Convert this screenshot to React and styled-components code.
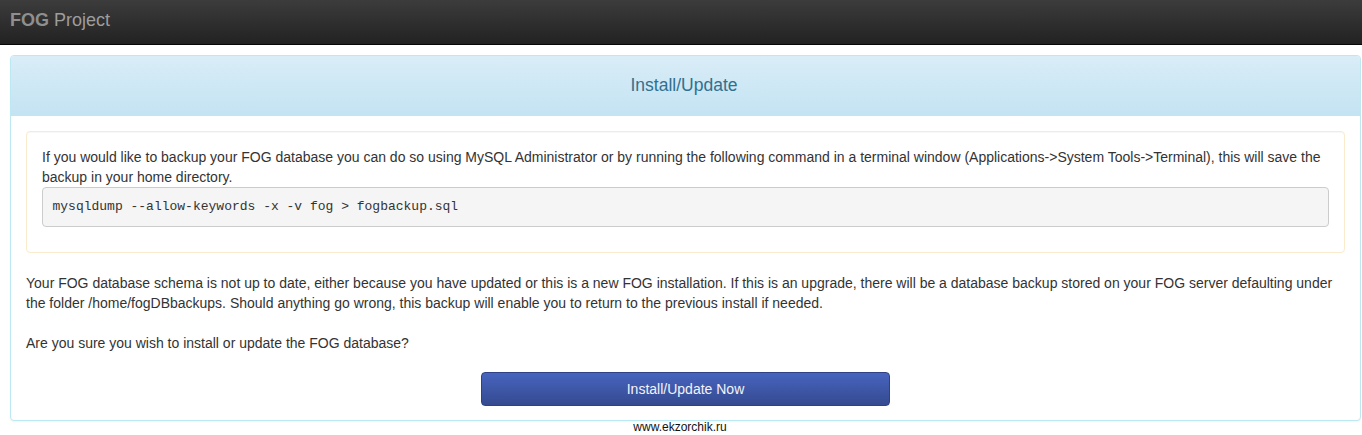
import React from "react";
import styled, { createGlobalStyle } from "styled-components";

const Global = createGlobalStyle`
  html, body { margin: 0; padding: 0; background: #fff; }
  body {
    font-family: "Liberation Sans", Arial, sans-serif;
    font-size: 14px;
    line-height: 1.42857143;
    color: #333;
  }
  * { box-sizing: border-box; }
`;

const Navbar = styled.header`
  height: 45px;
  background: linear-gradient(to bottom, #3c3c3c 0%, #222 100%);
  border-bottom: 1px solid #080808;
  display: flex;
  align-items: center;
  padding: 0 10px 4px;
`;

const Brand = styled.div`
  font-size: 18px;
  line-height: 20px;
  color: #9d9d9d;
  b { color: #8f8f8f; font-weight: bold; }
`;

const Page = styled.main`
  padding: 10px 1px 0 10px;
`;

const Panel = styled.section`
  border: 1px solid #bce8f1;
  border-radius: 4px;
  background: #fff;
  box-shadow: 0 1px 2px rgba(0, 0, 0, 0.05);
`;

const PanelHeading = styled.div`
  height: 60px;
  display: flex;
  align-items: center;
  justify-content: center;
  background: linear-gradient(to bottom, #d9edf7 0%, #c4e3f3 100%);
  border-bottom: 1px solid #bce8f1;
  border-radius: 3px 3px 0 0;
`;

const PanelTitle = styled.h3`
  margin: 0;
  font-size: 17.5px;
  font-weight: normal;
  line-height: 20px;
  color: #31708f;
  padding: 0 3px 1px 0;
`;

const PanelBody = styled.div`
  padding: 15px 15px 14px;
`;

const Well = styled.div`
  border: 1px solid #faebcc;
  border-radius: 4px;
  background: #fff;
  padding: 15px;
  margin-bottom: 20px;
  box-shadow: inset 0 1px 1px rgba(0, 0, 0, 0.03);
`;

const Text = styled.p`
  margin: 0 0 ${(p) => p.$mb || 0}px;
`;

const Code = styled.pre`
  margin: 0 0 10px;
  padding: 9.5px;
  font-family: "Liberation Mono", "Courier New", monospace;
  font-size: 13px;
  line-height: 1.42857143;
  color: #333;
  background: #f5f5f5;
  border: 1px solid #ccc;
  border-radius: 4px;
`;

const Actions = styled.div`
  display: flex;
  justify-content: center;
  padding-top: 9px;
`;

const Button = styled.button`
  width: 409px;
  height: 34px;
  font-family: "Liberation Sans", Arial, sans-serif;
  font-size: 14px;
  color: #f2f4fb;
  background: linear-gradient(to bottom, #4764be 0%, #354a90 100%);
  border: 1px solid #2e4184;
  border-radius: 4px;
  cursor: pointer;
`;

const Footer = styled.div`
  text-align: center;
  font-size: 12px;
  line-height: 14px;
  color: #111;
  margin-top: -1px;
  padding-right: 11px;
`;

export default function App() {
  return (
    <>
      <Global />
      <Navbar>
        <Brand>
          <b>FOG</b> Project
        </Brand>
      </Navbar>
      <Page>
        <Panel>
          <PanelHeading>
            <PanelTitle>Install/Update</PanelTitle>
          </PanelHeading>
          <PanelBody>
            <Well>
              <Text>
                If you would like to backup your FOG database you can do so using MySQL Administrator or by running the
                following command in a terminal window (Applications-&gt;System Tools-&gt;Terminal), this will save the
                backup in your home directory.
              </Text>
              <Code>mysqldump --allow-keywords -x -v fog &gt; fogbackup.sql</Code>
            </Well>
            <Text $mb={10}>
              Your FOG database schema is not up to date, either because you have updated or this is a new FOG
              installation. If this is an upgrade, there will be a database backup stored on your FOG server defaulting
              under the folder /home/fogDBbackups. Should anything go wrong, this backup will enable you to return to the
              previous install if needed.
              <br />
              <br />
              Are you sure you wish to install or update the FOG database?
            </Text>
            <Actions>
              <Button type="button">Install/Update Now</Button>
            </Actions>
          </PanelBody>
        </Panel>
        <Footer>www.ekzorchik.ru</Footer>
      </Page>
    </>
  );
}
